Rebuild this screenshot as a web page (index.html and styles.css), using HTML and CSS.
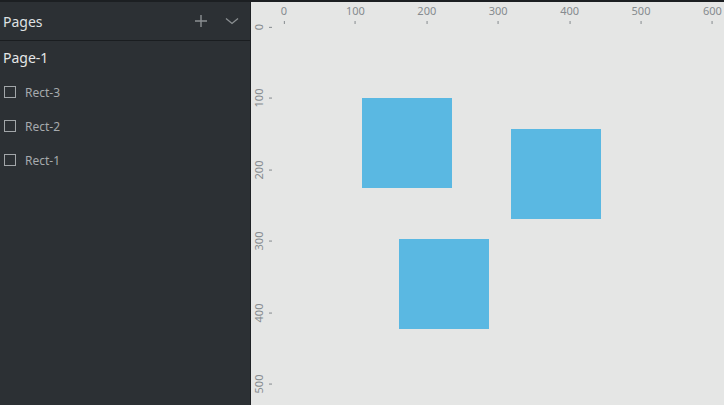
FILE: index.html
```html
<!doctype html>
<html lang="en">
 <head>
  <meta charset="UTF-8">
  <meta name="viewport" content="width=device-width, initial-scale=1.0">
  <title>Pages - Canvas</title>
  <link rel="stylesheet" href="styles.css">
 </head>
 <body>
  <div class="topbar"></div>
  <div class="main">
   <aside class="sidebar">
    <div class="sidebar-header">
     <span class="sidebar-title">Pages</span>
     <div class="header-actions">
      <svg class="icon" width="14" height="14" viewBox="0 0 14 14"><path d="M7 1v12M1 7h12" stroke="#8c9093" stroke-width="1.4" fill="none"/></svg>
      <svg class="icon" width="14" height="14" viewBox="0 0 14 14"><path d="M1 4.5l6 5 6-5" stroke="#8c9093" stroke-width="1.3" fill="none"/></svg>
     </div>
    </div>
    <div class="page-item">Page-1</div>
    <ul class="layers">
     <li class="layer"><span class="checkbox"></span>Rect-3</li>
     <li class="layer"><span class="checkbox"></span>Rect-2</li>
     <li class="layer"><span class="checkbox"></span>Rect-1</li>
    </ul>
   </aside>

   <div class="canvas" id="canvas">
    <!-- shapes, in canvas pixels -->
    <div class="shape" style="left:111px; top:96px;"></div>
    <div class="shape" style="left:260px; top:127px;"></div>
    <div class="shape" style="left:148px; top:237px;"></div>
   </div>
  </div>

  <script>
    // ruler labels: 100 units = 71.4px, origin at (33, 25) inside canvas
    const canvas = document.getElementById('canvas');
    const SCALE = 0.714;

    for (let i = 0; i <= 6; i++) {
      const x = 33 + i * 100 * SCALE;
      const label = document.createElement('div');
      label.className = 'ruler-x';
      label.style.left = x + 'px';
      label.innerHTML = '<span>' + (i * 100) + '</span><i></i>';
      canvas.appendChild(label);
    }

    for (let i = 0; i <= 5; i++) {
      const y = 25 + i * 100 * SCALE;
      const label = document.createElement('div');
      label.className = 'ruler-y';
      label.style.top = y + 'px';
      label.innerHTML = '<span>' + (i * 100) + '</span><i></i>';
      canvas.appendChild(label);
    }
  </script>
 </body>
</html>
```

FILE: styles.css
```css
html, body {
  margin: 0;
  padding: 0;
  height: 100%;
}
body {
  font-family: "Noto Sans", "Open Sans", sans-serif;
  background-color: #2c3034;
  display: flex;
  flex-direction: column;
  overflow: hidden;
}
.topbar {
  height: 2px;
  background-color: #1c1f22;
  flex: none;
}
.main {
  flex: 1;
  display: flex;
  min-height: 0;
}
.sidebar {
  width: 250px;
  flex: none;
  background-color: #2c3034;
  border-right: 1px solid #1e2124;
  color: #e2e4e5;
}
.sidebar-header {
  height: 38px;
  display: flex;
  align-items: center;
  justify-content: space-between;
  padding: 0 11px 0 3px;
  border-bottom: 1px solid #1a1d20;
}
.sidebar-title {
  font-size: 14px;
  color: #dfe1e3;
}
.header-actions {
  display: flex;
  align-items: center;
  gap: 17px;
}
.icon {
  display: block;
}
.page-item {
  height: 33px;
  display: flex;
  align-items: center;
  padding-left: 3px;
  font-size: 14px;
  color: #e4e6e7;
}
.layers {
  list-style: none;
  margin: 0;
  padding: 1px 0 0;
}
.layer {
  height: 34px;
  display: flex;
  align-items: center;
  padding-left: 4px;
  font-size: 12px;
  color: #a6aaad;
}
.checkbox {
  width: 10px;
  height: 10px;
  border: 1px solid #a2a6a9;
  margin-right: 9px;
}
.canvas {
  flex: 1;
  position: relative;
  background-color: #e5e6e5;
  overflow: hidden;
}
.shape {
  position: absolute;
  width: 90px;
  height: 90px;
  background-color: #5ab8e2;
}
.ruler-x {
  position: absolute;
  top: 2px;
  transform: translateX(-50%);
  display: flex;
  flex-direction: column;
  align-items: center;
  font-size: 11px;
  color: #868b8f;
  line-height: 14px;
}
.ruler-x i {
  width: 1px;
  height: 3px;
  margin-top: 3px;
  background-color: #868b8f;
}
.ruler-y {
  position: absolute;
  left: 1px;
  transform: translateY(-50%);
  display: flex;
  align-items: center;
  font-size: 11px;
  color: #868b8f;
}
.ruler-y span {
  writing-mode: vertical-rl;
  transform: rotate(180deg);
  line-height: 14px;
}
.ruler-y i {
  width: 3px;
  height: 1px;
  margin-left: 3px;
  background-color: #868b8f;
}
```
